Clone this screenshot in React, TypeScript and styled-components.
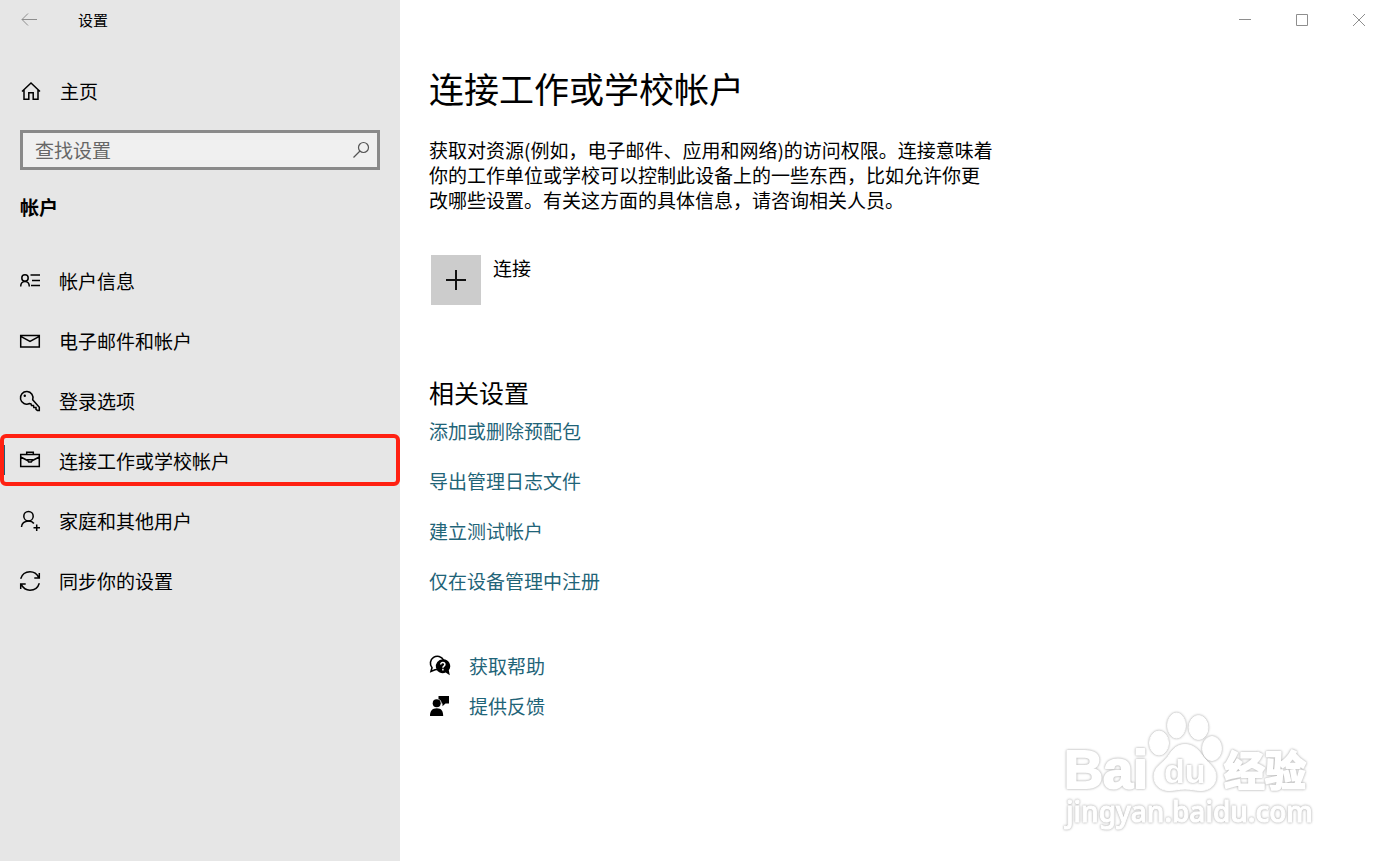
import React from "react";
import styled, { createGlobalStyle } from "styled-components";

const GlobalStyle = createGlobalStyle`
  *, *::before, *::after { box-sizing: border-box; }
  body {
    margin: 0;
    background: #fff;
    color: #000;
    font-family: "Noto Sans CJK SC", sans-serif;
    font-size: 19px;
    line-height: 25px;
  }
  button, input { font: inherit; color: inherit; }
`;

const Window = styled.div`
  position: relative;
  display: flex;
  min-height: 100vh;
`;

const Sidebar = styled.aside`
  flex: 0 0 400px;
  background: #e6e6e6;
`;

const SidebarTitle = styled.header`
  display: flex;
  align-items: center;
  gap: 40px;
  height: 40px;
  padding: 0 20px;
  font-size: 15px;
`;

const IconButton = styled.button`
  display: flex;
  align-items: center;
  justify-content: center;
  padding: 0;
  border: 0;
  background: none;
`;

const HomeLink = styled.a`
  display: flex;
  align-items: center;
  gap: 18px;
  height: 60px;
  margin-top: 20px;
  padding: 0 20px;
  color: inherit;
  text-decoration: none;
`;

const SearchBox = styled.form`
  display: flex;
  align-items: center;
  height: 40px;
  margin: 10px 20px 0;
  padding: 0 7px 0 12px;
  border: 3px solid #8a8a8a;
  background: #f0f0f0;
`;

const SearchInput = styled.input`
  flex: 1;
  min-width: 0;
  padding: 0 0 2px;
  border: 0;
  outline: 0;
  background: none;
  &::placeholder { color: #666; opacity: 1; }
`;

const SectionTitle = styled.h2`
  margin: 24px 20px 0;
  font-size: 19px;
  line-height: 25px;
  font-weight: 700;
`;

const NavList = styled.ul`
  margin: 32px 0 0;
  padding: 0;
  list-style: none;
`;

const NavItem = styled.li`
  position: relative;
`;

const NavLink = styled.a<{ $active?: boolean }>`
  display: flex;
  align-items: center;
  gap: 19px;
  height: 60px;
  padding: 0 20px;
  color: inherit;
  text-decoration: none;
  background: ${(p) => (p.$active ? "linear-gradient(#1b5f78, #1b5f78) 0 14px / 5px 30px no-repeat" : "none")};
`;

const Highlight = styled.span`
  position: absolute;
  inset: 3px 0 5px;
  border: 4px solid #ff2112;
  border-radius: 6px;
  pointer-events: none;
`;

const Content = styled.main`
  flex: 1;
  min-width: 0;
`;

const Caption = styled.div`
  display: flex;
  justify-content: flex-end;
  height: 40px;
  padding-right: 1px;
`;

const CaptionButton = styled(IconButton)`
  width: 57px;
`;

const Body = styled.div`
  padding: 18px 29px 30px;
`;

const PageTitle = styled.h1`
  margin: 0;
  font-size: 35px;
  line-height: 60px;
  font-weight: 400;
`;

const Description = styled.p`
  margin: 19px 0 0;
  white-space: pre-line;
`;

const ConnectButton = styled.button`
  display: flex;
  align-items: flex-start;
  gap: 12px;
  margin: 43px 0 0 2px;
  padding: 0;
  border: 0;
  background: none;
`;

const PlusTile = styled.span`
  display: flex;
  align-items: center;
  justify-content: center;
  width: 50px;
  height: 50px;
  background: #ccc;
`;

const RelatedTitle = styled.h2`
  margin: 71px 0 0;
  font-size: 25px;
  line-height: 32px;
  font-weight: 400;
`;

const LinkList = styled.div`
  display: flex;
  flex-direction: column;
  align-items: flex-start;
  gap: 25px;
  margin-top: 10px;
`;

const TextLink = styled.a`
  color: #1f6478;
  text-decoration: none;
`;

const HelpList = styled.div`
  display: flex;
  flex-direction: column;
  align-items: flex-start;
  gap: 15px;
  margin-top: 60px;
`;

const HelpLink = styled(TextLink)`
  display: flex;
  align-items: center;
  gap: 18px;
`;

const Label = styled.span``;

const RaisedLabel = styled.span`
  padding-bottom: 2px;
`;

const Icon = styled.svg`
  display: block;
  flex: none;
  overflow: visible;
  color: #000;
`;

const CaptionIcon = styled(Icon)`
  color: #8e8e8e;
`;

const Watermark = styled.svg`
  position: absolute;
  right: 70px;
  bottom: 24px;
  pointer-events: none;

  text, g {
    filter: drop-shadow(0 0 1px #b4b4b4) drop-shadow(0 0 1px #e4e4e4);
  }
`;

const line = { fill: "none", stroke: "currentColor", strokeWidth: 1.5 };

const HomeIcon = () => (
  <Icon width="22" height="22" viewBox="0 0 22 22" {...line}>
    <path d="M2 12.500 11 4l9 8.500M4 11v9.300h4.800v-6.600h4.400v6.600H18V11" />
  </Icon>
);

const AccountIcon = () => (
  <Icon width="20" height="20" viewBox="0 0 20 20" {...line}>
    <circle cx="5" cy="7" r="3.200" />
    <path d="M.7 15.500c0-3 1.800-5.100 4.300-5.100s4.300 2.100 4.300 5.100M10.500 4H20M12 9.500h8M11 14.500h9" />
  </Icon>
);

const MailIcon = () => (
  <Icon width="20" height="20" viewBox="0 0 20 20" {...line}>
    <path d="M.7 4.500h18.600v11.500H.7zM.7 5.300l9.300 5 9.300-5" />
  </Icon>
);

const KeyIcon = () => (
  <Icon width="20" height="20" viewBox="0 0 20 20" {...line}>
    <path d="M12.700 8.800A6.300 6.300 0 1 0 9.500 12.500l1.500.3.500 1.700h2l.3 2h2.200v1.800l1.400 1.100h1.900v-3.200z" />
    <circle cx="4.800" cy="4.800" r="1.200" fill="currentColor" stroke="none" />
  </Icon>
);

const BriefcaseIcon = () => (
  <Icon width="20" height="20" viewBox="0 0 20 20" {...line}>
    <path d="M.7 3.500h18.600v12H.7zM6.700 3.500V1.300h6.600v2.200M.7 6l6.800 3.500M12.500 9.500 19.300 6" />
    <path d="M7.700 8.800h4.600v.8l-1 1.500H8.700l-1-1.500z" />
  </Icon>
);

const FamilyIcon = () => (
  <Icon width="20" height="20" viewBox="0 0 20 20" {...line}>
    <circle cx="8.500" cy="5.200" r="4.700" />
    <path d="M1.500 16c0-3.600 3-6.100 7-6.100 2.500 0 4.200.9 5.400 2.600M16.700 13.500v6.500M13.500 16.700H20" />
  </Icon>
);

const SyncIcon = () => (
  <Icon width="20" height="20" viewBox="0 0 20 20" {...line}>
    <path d="M.7 7.800C2 3.500 5.500.8 10 .8c4 0 7 2.200 8.800 5.800M19.300 2v5h-5M19.300 12.200c-1.300 4.300-4.800 7-9.300 7-4 0-7-2.200-8.800-5.800M.7 18v-5h5" />
  </Icon>
);

const HelpIcon = () => (
  <Icon width="22" height="22" viewBox="0 0 22 22">
    <path d="M8 14.500 6 14.800 2 16.500l1-3.800A7 7 0 1 1 14.600 5" fill="none" stroke="currentColor" strokeWidth="1.600" />
    <path d="M13.700 4.300a6.900 6.900 0 1 0 3 13.100l4.100 2.900-1-5a6.900 6.900 0 0 0-6.100-11z" fill="currentColor" />
    <path d="M11.700 9.500c0-2.700 4.200-2.500 4.200 0 0 1.700-2 1.600-2 3.200M13.900 13.800v1.700" fill="none" stroke="#fff" strokeWidth="1.500" />
  </Icon>
);

const FeedbackIcon = () => (
  <Icon width="22" height="22" viewBox="0 0 22 22" fill="currentColor">
    <circle cx="7.700" cy="8.200" r="4" />
    <path d="M1 21c0-5 2.300-7.700 6.800-7.700s6.400 2.700 6.400 7.700zM9.500 1H20v7.500h-3.500l-3 2.700V8.500h-.8c0-2.200-1.200-3.800-3.200-4.500z" />
  </Icon>
);

const navItems = [
  { label: "帐户信息", Glyph: AccountIcon },
  { label: "电子邮件和帐户", Glyph: MailIcon },
  { label: "登录选项", Glyph: KeyIcon },
  { label: "连接工作或学校帐户", Glyph: BriefcaseIcon, active: true },
  { label: "家庭和其他用户", Glyph: FamilyIcon },
  { label: "同步你的设置", Glyph: SyncIcon },
];

const relatedLinks = ["添加或删除预配包", "导出管理日志文件", "建立测试帐户", "仅在设备管理中注册"];

const description = `获取对资源(例如，电子邮件、应用和网络)的访问权限。连接意味着
你的工作单位或学校可以控制此设备上的一些东西，比如允许你更
改哪些设置。有关这方面的具体信息，请咨询相关人员。`;

export default function App() {
  return (
    <>
      <GlobalStyle />
      <Window>
        <Sidebar>
          <SidebarTitle>
            <IconButton aria-label="返回">
              <CaptionIcon width="18" height="14" viewBox="0 0 18 14" fill="none" stroke="currentColor">
                <path d="M8 .5 2 6.500l6 6M2 6.500h15" />
              </CaptionIcon>
            </IconButton>
            <RaisedLabel>设置</RaisedLabel>
          </SidebarTitle>
          <HomeLink href="#home">
            <HomeIcon />
            <Label>主页</Label>
          </HomeLink>
          <SearchBox role="search">
            <SearchInput type="text" aria-label="查找设置" placeholder="查找设置" />
            <IconButton type="button" aria-label="搜索">
              <Icon width="18" height="18" viewBox="0 0 18 18" fill="none" stroke="#555" strokeWidth="1.200">
                <circle cx="11.500" cy="6.500" r="5" />
                <path d="M8 10 1.500 16.500" />
              </Icon>
            </IconButton>
          </SearchBox>
          <SectionTitle>帐户</SectionTitle>
          <nav>
            <NavList>
              {navItems.map(({ label, Glyph, active }) => (
                <NavItem key={label}>
                  <NavLink href="#" $active={active} aria-current={active ? "page" : undefined}>
                    <Glyph />
                    <RaisedLabel>{label}</RaisedLabel>
                  </NavLink>
                  {active && <Highlight />}
                </NavItem>
              ))}
            </NavList>
          </nav>
        </Sidebar>
        <Content>
          <Caption>
            <CaptionButton aria-label="最小化">
              <CaptionIcon width="12" height="12" viewBox="0 0 12 12" stroke="currentColor">
                <path d="M0 5.500h12" />
              </CaptionIcon>
            </CaptionButton>
            <CaptionButton aria-label="最大化">
              <CaptionIcon width="12" height="12" viewBox="0 0 12 12" fill="none" stroke="currentColor">
                <path d="M.5.5h11v11H.5z" />
              </CaptionIcon>
            </CaptionButton>
            <CaptionButton aria-label="关闭">
              <CaptionIcon width="12" height="12" viewBox="0 0 12 12" stroke="currentColor">
                <path d="m0 0 12 12M12 0 0 12" />
              </CaptionIcon>
            </CaptionButton>
          </Caption>
          <Body>
            <PageTitle>连接工作或学校帐户</PageTitle>
            <Description>{description}</Description>
            <ConnectButton>
              <PlusTile>
                <Icon width="20" height="20" viewBox="0 0 20 20" stroke="#111" strokeWidth="2">
                  <path d="M0 10h20M10 0v20" />
                </Icon>
              </PlusTile>
              <Label>连接</Label>
            </ConnectButton>
            <RelatedTitle>相关设置</RelatedTitle>
            <LinkList>
              {relatedLinks.map((text) => (
                <TextLink key={text} href="#">{text}</TextLink>
              ))}
            </LinkList>
            <HelpList>
              <HelpLink href="#"><HelpIcon /><Label>获取帮助</Label></HelpLink>
              <HelpLink href="#"><FeedbackIcon /><Label>提供反馈</Label></HelpLink>
            </HelpList>
          </Body>
        </Content>
        <Watermark width="260" height="130" viewBox="0 0 260 130" fill="#fff" stroke="#fff" strokeWidth="2" strokeLinejoin="round">
          <text x="6" y="81" fontFamily="Liberation Sans" fontWeight="700" fontSize="54">Bai</text>
          <g strokeWidth="1">
            <ellipse cx="101" cy="36" rx="9.500" ry="12" />
            <ellipse cx="118.500" cy="18.500" rx="9" ry="12.500" />
            <ellipse cx="140.500" cy="20.500" rx="9.500" ry="12" />
            <ellipse cx="154" cy="41.500" rx="9.500" ry="12" />
            <path d="M127 37.500c-9 0-13 6-17 12-5 7-14 10-14 20 0 9 7 14 15 14 6 0 10-1.500 16-1.500s10 1.500 16 1.500c8 0 15-5 15-14 0-9-8-13-13-20-4-6-9-12-18-12z" />
          </g>
          <text x="106" y="76" fontFamily="Liberation Sans" fontWeight="700" fontSize="34" strokeWidth="0">du</text>
          <text x="166" y="79" fontFamily="Noto Sans CJK SC" fontWeight="700" fontSize="41">经验</text>
          <text x="8" y="115" fontFamily="Noto Sans" fontWeight="500" fontSize="28" strokeWidth="1">jingyan.baidu.com</text>
        </Watermark>
      </Window>
    </>
  );
}
